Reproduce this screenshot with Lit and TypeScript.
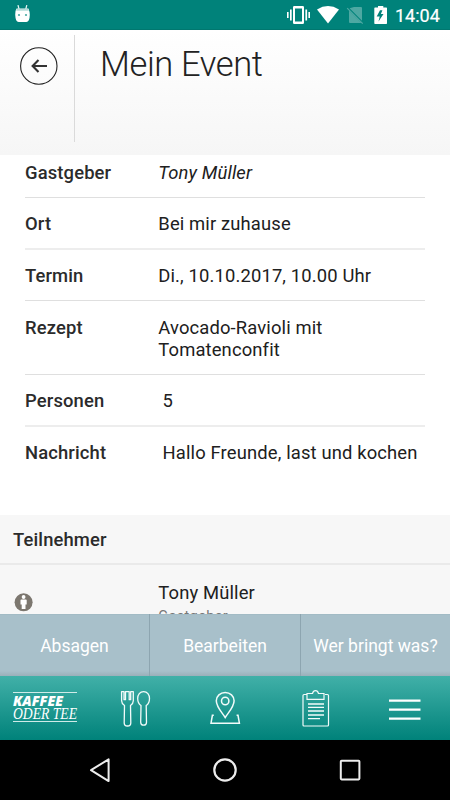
import { LitElement, html, css } from "lit";
import { customElement } from "lit/decorators.js";
import { classMap } from "lit/directives/class-map.js";

interface Detail {
  label: string;
  value: string;
  height: number;
  top: number;
  italic?: boolean;
  indent?: boolean;
  soft?: boolean;
  last?: boolean;
}

const DETAILS: Detail[] = [
  { label: "Gastgeber", value: "Tony Müller", height: 43, top: 7, italic: true },
  { label: "Ort", value: "Bei mir zuhause", height: 52, top: 15, soft: true },
  { label: "Termin", value: "Di., 10.10.2017, 10.00 Uhr", height: 51, top: 15 },
  { label: "Rezept", value: "Avocado-Ravioli mit Tomatenconfit", height: 74, top: 16 },
  { label: "Personen", value: "5", height: 52, top: 15, indent: true, soft: true },
  { label: "Nachricht", value: "Hallo Freunde, last und kochen", height: 88, top: 15, indent: true, last: true },
];

@customElement("status-bar")
class StatusBar extends LitElement {
  static styles = css`
    :host {
      display: flex;
      align-items: center;
      height: 30px;
      box-sizing: border-box;
      padding: 0 9px 0 14px;
      background: linear-gradient(#00827a 0 29px, #00776f 29px);
      color: #fff;
      font: 400 18px/30px Roboto, sans-serif;
    }
    svg { display: block; flex: none; }
    .icons { margin-left: auto; }
    .clock { width: 46px; margin-left: 7px; padding-top: 1px; white-space: nowrap; -webkit-text-stroke: 0.2px #fff; }
  `;
  render() {
    return html`
      <svg width="17" height="30" viewBox="14 0 17 30">
        <path d="M18 5.2l1 4M26.800 5.200l-1 4" stroke="#e4f3f1" stroke-width="1.300" />
        <path d="M16.400 8.700h12.200q1.200 3 1.200 6t-1 5.500q-.8 1.700-2.500 1.700h-7.600q-1.700 0-2.500-1.700t-1-5.500 1.200-6z" fill="#fff" />
        <path d="M16.700 8.500h11.600l.6 2.200H16.100z" fill="#b5dcd9" />
        <circle cx="19" cy="15" r="1.100" fill="#4aaaa4" /><circle cx="26" cy="15" r="1.100" fill="#4aaaa4" />
      </svg>
      <svg class="icons" width="102" height="30" viewBox="286 0 102 30">
        <g fill="#fff">
          <path fill-rule="evenodd" d="M294.300 6h8.400q1.300 0 1.300 1.300v15.400q0 1.300-1.300 1.300h-8.400q-1.300 0-1.300-1.300V7.300q0-1.300 1.300-1.300zM295 8.600v12.800h7V8.600z" />
          <path d="M290 9.500h1.700v11H290zM287 12h1.600v6H287zM305.400 9.500h1.700v11h-1.700zM308.400 12h1.600v6h-1.600z" />
          <path d="M317 9.400Q328 2.600 339 9.400L328 23.600z" />
          <path fill-rule="evenodd" d="M375 7.600h3V6h5.300v1.600h3q.7 0 .7.700v15q0 .7-.7.700h-11.300q-.7 0-.7-.7v-15q0-.7.700-.7zM380 10.300l-3.300 6.200h3l-1.200 5 5-7.500h-2.600l1.500-3.700z" />
        </g>
        <path d="M354 7h7q1 0 1 1v12.800L349.600 8.300zM349 10.500L361.500 23H350q-1 0-1-1z" fill="#4da8a2" />
        <path d="M347.200 8.200l15.500 15.500" stroke="#4da8a2" stroke-width="1.200" />
      </svg>
      <span class="clock">14:04</span>
    `;
  }
}

@customElement("page-header")
class PageHeader extends LitElement {
  static styles = css`
    :host {
      display: flex;
      height: 125px;
      box-sizing: border-box;
      padding-top: 5px;
      background: linear-gradient(#fff, #f6f6f6);
    }
    .back { width: 74px; height: 107px; border-right: 1px solid #dadada; }
    svg { display: block; }
    h1 {
      margin: 6px 0 0 25px;
      color: #222;
      font: 300 34.500px/46px Roboto, sans-serif;
      letter-spacing: -0.370px;
      white-space: nowrap;
    }
  `;
  render() {
    return html`
      <div class="back">
        <svg width="74" height="60" viewBox="0 35 74 60" fill="none">
          <circle cx="38.800" cy="66" r="18.200" stroke="#222" stroke-width="1.100" />
          <path d="M38.500 60L32.600 66l5.900 6M33 66h14" stroke="#333" stroke-width="2.100" />
        </svg>
      </div>
      <h1>Mein Event</h1>
    `;
  }
}

@customElement("event-details")
class EventDetails extends LitElement {
  static styles = css`
    :host {
      display: block;
      padding: 0 25px;
      background: #fff;
      font: 400 18.400px/22px Roboto, sans-serif;
      letter-spacing: 0.140px;
      color: #202020;
    }
    .row {
      display: flex;
      box-sizing: border-box;
      border-bottom: 1px solid #dfdfdf;
    }
    .soft { border-bottom: 2px solid #ededed; }
    .last { border-bottom: 0; }
    .label { flex: none; width: 133.300px; font-weight: 500; color: #2b2b2b; }
    .value { width: 200px; white-space: nowrap; }
    .wrap { white-space: normal; }
    .italic { font-style: italic; }
    .indent { padding-left: 4.300px; }
  `;
  render() {
    return DETAILS.map(
      (d) => html`
        <div class=${classMap({ row: true, soft: !!d.soft, last: !!d.last })}
          style="height:${d.height}px;padding-top:${d.top}px">
          <div class="label">${d.label}</div>
          <div class=${classMap({ value: true, italic: !!d.italic, indent: !!d.indent, wrap: d.label === "Rezept" })}>${d.value}</div>
        </div>
      `
    );
  }
}

@customElement("guest-list")
class GuestList extends LitElement {
  static styles = css`
    :host {
      display: block;
      height: 99px;
      overflow: hidden;
      background: #f7f7f7;
      font: 400 18.400px/22px Roboto, sans-serif;
      letter-spacing: 0.140px;
      color: #202020;
    }
    h2 {
      margin: 0;
      height: 50px;
      box-sizing: border-box;
      padding: 14px 0 0 13px;
      border-bottom: 2px solid #eaeaea;
      font: inherit;
      font-weight: 500;
      color: #2b2b2b;
    }
    .guest { display: flex; padding: 17px 0 0 14px; }
    svg { display: block; flex: none; margin: 11px 125.300px 0 0; }
    .role { font-size: 14.400px; line-height: 19px; margin-top: 3px; letter-spacing: 0.400px; color: #777; }
  `;
  render() {
    return html`
      <h2>Teilnehmer</h2>
      <div class="guest">
        <svg width="19" height="19" viewBox="0 0 19 19">
          <circle cx="9.600" cy="9.300" r="9" fill="#7c776f" />
          <circle cx="9.600" cy="4" r="1.900" fill="#fff" />
          <path d="M7.300 6.500h4.600q.8 0 .8.800v4.200h-1.200V16H7.700v-4.500H6.500V7.300q0-.8.800-.8z" fill="#fff" />
        </svg>
        <div>
          <div>Tony Müller</div>
          <div class="role">Gastgeber</div>
        </div>
      </div>
    `;
  }
}

@customElement("action-bar")
class ActionBar extends LitElement {
  static styles = css`
    :host {
      display: grid;
      grid-template-columns: 150px 151px 149px;
      height: 62px;
      background: linear-gradient(#a2bbc5 0 1px, #a8c0ca 1px 57px, #9aafb9);
    }
    .action {
      display: flex;
      align-items: center;
      justify-content: center;
      padding-top: 2px;
      box-sizing: border-box;
      border-right: 1px solid #8da5b0;
      font: 400 17.500px/22px Roboto, sans-serif;
      color: #fff;
      white-space: nowrap;
    }
    .action:last-child { border-right: 0; }
  `;
  render() {
    return ["Absagen", "Bearbeiten", "Wer bringt was?"].map((t) => html`<div class="action">${t}</div>`);
  }
}

@customElement("tab-bar")
class TabBar extends LitElement {
  static styles = css`
    :host {
      display: grid;
      grid-template-columns: repeat(5, 90px);
      height: 64px;
      background: linear-gradient(#41b0a8, #00827a);
      color: #fff;
    }
    svg { display: block; }
    .logo {
      width: 64px;
      height: 30px;
      box-sizing: border-box;
      margin: 16px 0 0 13px;
      border: solid #cfebe8;
      border-width: 1px 0;
      padding-top: 2px;
    }
    .logo svg { overflow: visible; }
    .bold { font: italic 800 14.500px "Open Sans", sans-serif; }
    .thin { font: italic 400 16px "Liberation Serif", serif; }
  `;
  render() {
    return html`
      <div class="logo">
        <svg width="64" height="27" fill="#fff">
          <text class="bold" x="0" y="11" textLength="50" lengthAdjust="spacingAndGlyphs">KAFFEE</text>
          <text class="thin" x="0" y="24" textLength="64" lengthAdjust="spacingAndGlyphs">ODER TEE</text>
        </svg>
      </div>
      <svg width="90" height="64" viewBox="90 676 90 64" fill="none" stroke="#f2fbfa" stroke-width="1.300" stroke-linejoin="round">
        <path d="M121.600 691.700h2.400v8h1.500v-8h3.700v8h1.500v-8h2.600v9q0 2.800-2.800 4.800l.3 17.500q0 3-3.300 3t-3.300-3l.3-17.500q-2.900-2-2.900-4.800z" />
        <path d="M143.600 691.600c3.700 0 5.900 3.200 5.900 6.800 0 3.400-1.600 5.900-3.300 7.200l.3 16.600q0 3-2.900 3t-2.900-3l.3-16.600c-1.700-1.300-3.300-3.800-3.300-7.200 0-3.600 2.200-6.800 5.900-6.800z" />
      </svg>
      <svg width="90" height="64" viewBox="180 676 90 64" fill="none" stroke="#f2fbfa" stroke-width="1.500">
        <path d="M225.200 717.500c-3.200-5-8.900-10.700-8.900-16.800a8.900 8.300 0 0 1 17.800 0c0 6.100-5.700 11.800-8.900 16.800z" />
        <circle cx="225.200" cy="701" r="3.700" />
        <path d="M213.800 715.300h-1.400L211 723.200h28.400l-1.400-7.900h-1.400" />
      </svg>
      <svg width="90" height="64" viewBox="270 676 90 64" fill="none" stroke="#f2fbfa" stroke-width="1.200">
        <path d="M306.500 694.500h-2.500q-1 0-1 1V725q0 1 1 1h23.500q1 0 1-1v-29.500q0-1-1-1H325M307 693.500h5.500q.8-2.800 3-2.800t3 2.800h5.500v5.800h-17z" />
        <path d="M308 704h16M308 707.400h16M308 711h16M308 715h16M308 718.600h12" stroke-width="1.300" />
      </svg>
      <svg width="90" height="64" viewBox="360 676 90 64" fill="none" stroke="#fff" stroke-width="2.200">
        <path d="M389 700.600h31.500M389 709.700h31.500M389 718.700h31.500" />
      </svg>
    `;
  }
}

@customElement("system-nav")
class SystemNav extends LitElement {
  static styles = css`
    :host { display: flex; height: 60px; background: #000; }
    svg { display: block; }
  `;
  render() {
    return html`
      <svg width="450" height="60" viewBox="0 740 450 60" fill="none" stroke="#ededed" stroke-width="2" stroke-linejoin="round">
        <path d="M108.600 759.300v21.800L91 770.200z" />
        <circle cx="225" cy="770" r="10.700" stroke-width="2.200" />
        <rect x="340.800" y="760.800" width="18.600" height="18.600" rx=".8" />
      </svg>
    `;
  }
}

@customElement("app-root")
class AppRoot extends LitElement {
  static styles = css`
    :host { display: flex; flex-direction: column; width: 450px; height: 800px; overflow: hidden; background: #fff; }
  `;
  render() {
    return html`
      <status-bar></status-bar>
      <page-header></page-header>
      <event-details></event-details>
      <guest-list></guest-list>
      <action-bar></action-bar>
      <tab-bar></tab-bar>
      <system-nav></system-nav>
    `;
  }
}
